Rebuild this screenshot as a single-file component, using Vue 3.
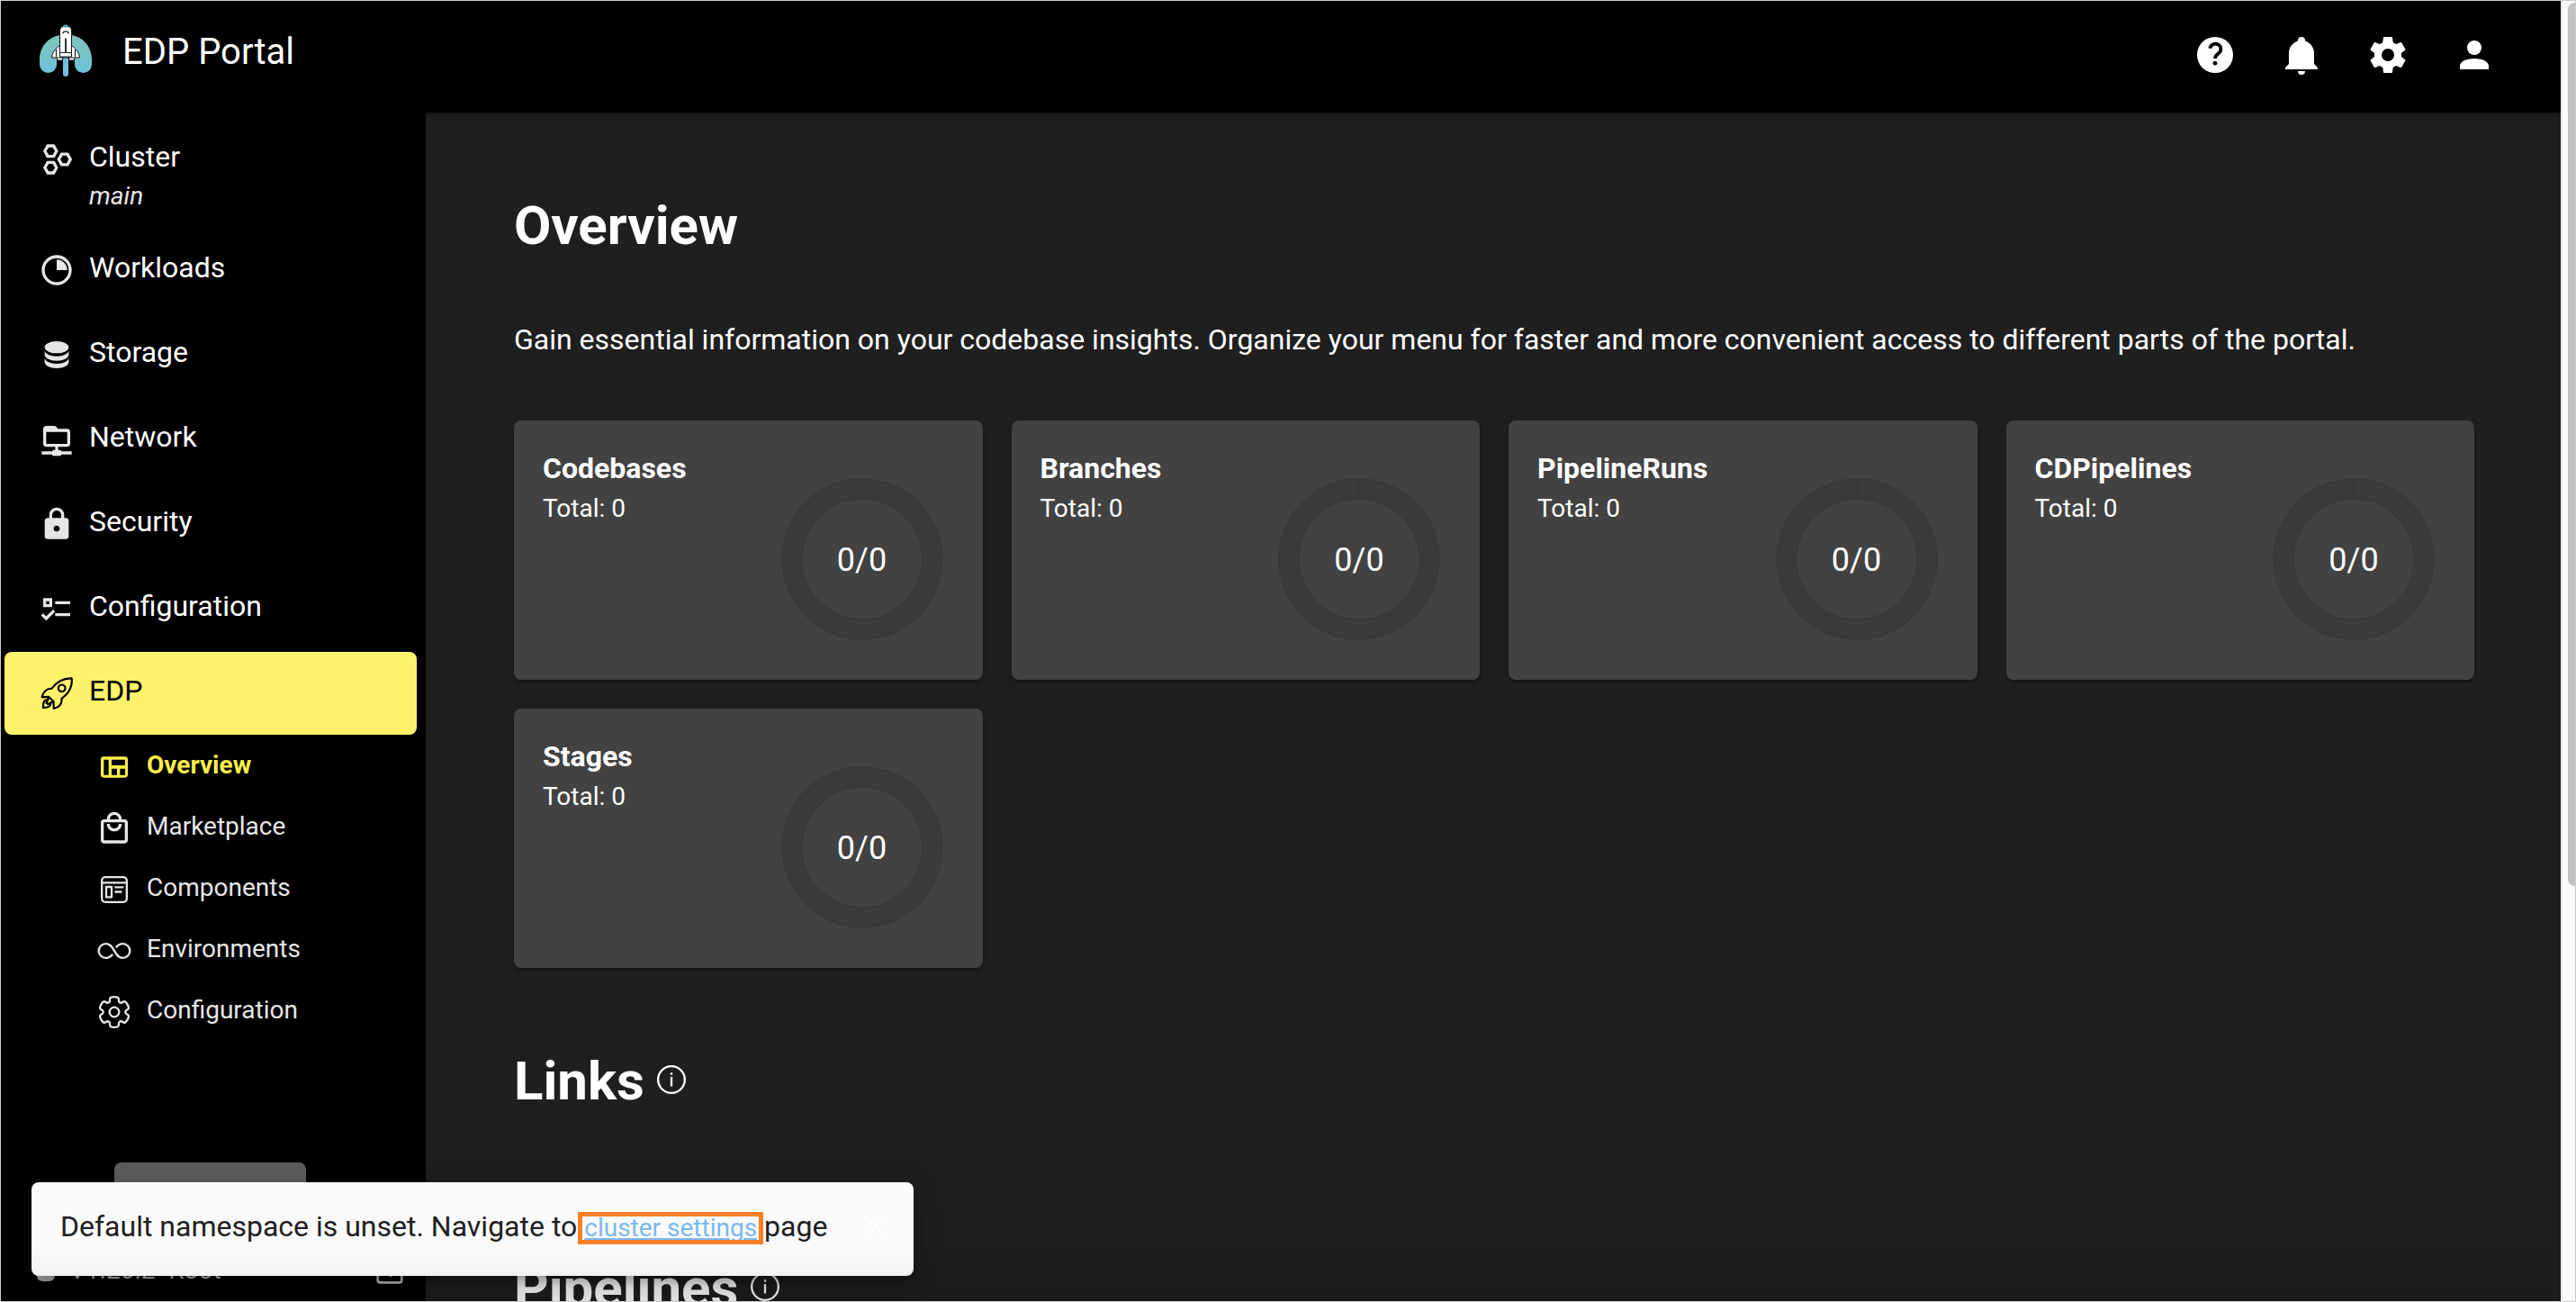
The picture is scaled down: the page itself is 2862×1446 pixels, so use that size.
<script setup>
const cards = ['Codebases', 'Branches', 'PipelineRuns', 'CDPipelines', 'Stages'].map((title) => ({
  title,
  total: 0,
  ok: 0,
}))

const headerActions = [
  { name: 'Notifications', path: 'M21,19V20H3V19L5,17V11C5,7.9 7.03,5.17 10,4.29C10,4.19 10,4.1 10,4A2,2 0 0,1 12,2A2,2 0 0,1 14,4C14,4.1 14,4.19 14,4.29C16.97,5.17 19,7.9 19,11V17L21,19M14,21A2,2 0 0,1 12,23A2,2 0 0,1 10,21' },
  { name: 'Settings', path: 'M12,15.5A3.5,3.5 0 0,1 8.5,12A3.5,3.5 0 0,1 12,8.5A3.5,3.5 0 0,1 15.5,12A3.5,3.5 0 0,1 12,15.5M19.43,12.97C19.47,12.65 19.5,12.33 19.5,12C19.5,11.67 19.47,11.34 19.43,11L21.54,9.37C21.73,9.22 21.78,8.95 21.66,8.73L19.66,5.27C19.54,5.05 19.27,4.96 19.05,5.05L16.56,6.05C16.04,5.66 15.5,5.32 14.87,5.07L14.5,2.42C14.46,2.18 14.25,2 14,2H10C9.75,2 9.54,2.18 9.5,2.42L9.13,5.07C8.5,5.32 7.96,5.66 7.44,6.05L4.95,5.05C4.73,4.96 4.46,5.05 4.34,5.27L2.34,8.73C2.21,8.95 2.27,9.22 2.46,9.37L4.57,11C4.53,11.34 4.5,11.67 4.5,12C4.5,12.33 4.53,12.65 4.57,12.97L2.46,14.63C2.27,14.78 2.21,15.05 2.34,15.27L4.34,18.73C4.46,18.95 4.73,19.03 4.95,18.95L7.44,17.94C7.96,18.34 8.5,18.68 9.13,18.93L9.5,21.58C9.54,21.82 9.75,22 10,22H14C14.25,22 14.46,21.82 14.5,21.58L14.87,18.93C15.5,18.67 16.04,18.34 16.56,17.94L19.05,18.95C19.27,19.03 19.54,18.95 19.66,18.73L21.66,15.27C21.78,15.05 21.73,14.78 21.54,14.63L19.43,12.97Z' },
  { name: 'Account', path: 'M12,4A4,4 0 0,1 16,8A4,4 0 0,1 12,12A4,4 0 0,1 8,8A4,4 0 0,1 12,4M12,14C16.42,14 20,15.79 20,18V20H4V18C4,15.79 7.58,14 12,14Z' },
]

const navItems = [
  { label: 'Cluster', note: 'main', path: 'M10.25 2L10.69 2.26L13 6.5L10.69 10.74L10.25 11H5.75L5.31 10.74L3 6.5L5.31 2.26L5.75 2ZM6.7 4L5.2 6.5L6.7 9H9.3L10.8 6.5L9.3 4ZM10.25 13L10.69 13.26L13 17.5L10.69 21.74L10.25 22H5.75L5.31 21.74L3 17.5L5.31 13.26L5.75 13ZM6.7 15L5.2 17.5L6.7 20H9.3L10.8 17.5L9.3 15ZM19.5 7.5L19.94 7.76L22.25 12L19.94 16.24L19.5 16.5H15L14.56 16.24L12.25 12L14.56 7.76L15 7.5ZM16 9.5L14.5 12L16 14.5H18.5L20 12L18.5 9.5Z' },
  { label: 'Workloads', path: 'M12 2a10 10 0 1 0 0 20a10 10 0 1 0 0-20M12 4a8 8 0 1 1 0 16a8 8 0 1 1 0-16M12 5V12H19A7 7 0 0 0 12 5Z' },
  { label: 'Storage', path: 'M12,3C7.58,3 4,4.79 4,7C4,9.21 7.58,11 12,11C16.42,11 20,9.21 20,7C20,4.79 16.42,3 12,3M4,9V12C4,14.21 7.58,16 12,16C16.42,16 20,14.21 20,12V9C20,11.21 16.42,13 12,13C7.58,13 4,11.21 4,9M4,14V17C4,19.21 7.58,21 12,21C16.42,21 20,19.21 20,17V14C20,16.21 16.42,18 12,18C7.58,18 4,16.21 4,14Z' },
  { label: 'Network', path: 'M15 20C15 19.45 14.55 19 14 19H13V17H19C20.11 17 21 16.11 21 15V7C21 5.9 20.11 5 19 5H13L11 3H5C3.9 3 3 3.9 3 5V15C3 16.11 3.9 17 5 17H11V19H10C9.45 19 9 19.45 9 20H2V22H9C9 22.55 9.45 23 10 23H14C14.55 23 15 22.55 15 22H22V20H15M5 15V7H19V15H5Z' },
  { label: 'Security', path: 'M12,17A2,2 0 0,0 14,15C14,13.89 13.1,13 12,13A2,2 0 0,0 10,15A2,2 0 0,0 12,17M18,8A2,2 0 0,1 20,10V20A2,2 0 0,1 18,22H6A2,2 0 0,1 4,20V10C4,8.89 4.9,8 6,8H7V6A5,5 0 0,1 12,1A5,5 0 0,1 17,6V8H18M12,3A3,3 0 0,0 9,6V8H15V6A3,3 0 0,0 12,3Z' },
  { label: 'Configuration', path: 'M3,5H9V11H3V5M5,7V9H7V7H5M11,7H21V9H11V7M11,15H21V17H11V15M5,20L1.5,16.5L2.91,15.09L5,17.17L9.59,12.59L11,14L5,20Z' },
]

// Closed outline with six rounded teeth, smoothed through segment midpoints
function gearOutline() {
  const pts = []
  for (let i = 0; i < 6; i++) {
    for (const [offset, r] of [[-22, 7.4], [-17, 10.6], [17, 10.6], [22, 7.4]]) {
      const a = ((i * 60 - 90 + offset) * Math.PI) / 180
      pts.push([12 + r * Math.cos(a), 12 + r * Math.sin(a)])
    }
  }
  const mid = (a, b) => `${((a[0] + b[0]) / 2).toFixed(2)} ${((a[1] + b[1]) / 2).toFixed(2)}`
  let d = `M${mid(pts[pts.length - 1], pts[0])}`
  pts.forEach((p, i) => {
    d += `Q${p[0].toFixed(2)} ${p[1].toFixed(2)} ${mid(p, pts[(i + 1) % pts.length])}`
  })
  return d + 'Z'
}

const subItems = [
  { label: 'Overview', active: true, path: 'M5 5H19A2 2 0 0 1 21 7V17A2 2 0 0 1 19 19H5A2 2 0 0 1 3 17V7A2 2 0 0 1 5 5ZM5 7V17.3H8.2V7ZM10.2 7V10.8H19.2V7ZM10.2 13V17.3H13.8V13ZM15.8 13V17.3H19.2V13Z' },
  { label: 'Marketplace', path: 'M19 6H17C17 3.2 14.8 1 12 1S7 3.2 7 6H5C3.9 6 3 6.9 3 8V20C3 21.1 3.9 22 5 22H19C20.1 22 21 21.1 21 20V8C21 6.9 20.1 6 19 6M12 3C13.7 3 15 4.3 15 6H9C9 4.3 10.3 3 12 3M19 20H5V8H19V20M12 12C10.3 12 9 10.7 9 9H7C7 11.8 9.2 14 12 14S17 11.8 17 9H15C15 10.7 13.7 12 12 12Z' },
  { label: 'Components', line: 'M6 3.7H18A2.3 2.3 0 0 1 20.3 6V18A2.3 2.3 0 0 1 18 20.3H6A2.3 2.3 0 0 1 3.7 18V6A2.3 2.3 0 0 1 6 3.7ZM3.7 7.4H20.3M6.6 10.2H10.2V17H6.6ZM12.2 10.4H18.2M12.2 13.5H17' },
  { label: 'Environments', line: 'M10.9 14.2C9.8 15.6 8.4 16.7 6.3 16.7A4.7 4.7 0 0 1 6.3 7.3C9.5 7.3 10.6 9.8 12 12S14.5 16.7 17.7 16.7A4.7 4.7 0 0 0 17.7 7.3C15.6 7.3 14.2 8.4 13.1 9.8' },
  { label: 'Configuration', line: gearOutline() + 'M12 8.8a3.2 3.2 0 1 0 0 6.4a3.2 3.2 0 1 0 0-6.4Z' },
]
</script>

<template>
  <div class="window">
    <div class="app">
      <header class="header">
        <div class="brand">
          <svg class="logo" viewBox="0 0 58 58" aria-hidden="true">
            <defs>
              <linearGradient id="arch" x1="0" y1="0" x2="0" y2="1">
                <stop offset="0" stop-color="#7fc5b8" />
                <stop offset="1" stop-color="#6fc1dc" />
              </linearGradient>
            </defs>
            <path fill="url(#arch)" d="M24 12h10C48 13 58 25 58 39v5.500a9.500 9.500 0 0 1-19 0V37C39 31 36 27 31 25H27C22 27 19 31 19 37v7.500a9.500 9.500 0 0 1-19 0V39C0 25 10 13 24 12z" />
            <rect x="26" y="36" width="6" height="22" rx="3" fill="#6fc1dc" />
            <g fill="#fff" stroke="#111" stroke-width="1">
              <path d="M18.500 35h7v5h-6zM32.500 35h7l-1 5h-6z" />
              <path d="M22.500 23.500C18 27 14 31 13.500 37H44.500C44 31 40 27 35.500 23.500z" />
              <path d="M22.500 36V8C22.500 4.500 24 2.500 26 2.500h6c2 0 3.500 2 3.500 5.500V36z" />
            </g>
            <path d="M25.500 3.500C26 1 27.500.3 29 .3S32 1 32.500 3.500z" fill="#45a9bf" />
            <path d="M25.700 10.500C26 7 32 7 32.300 10.500M22.500 31.500h13M18.500 28v8M39.500 28v8" fill="none" stroke="#222" stroke-width="1.200" />
            <path d="M29 15.500V31" stroke="#333" stroke-width="2" />
          </svg>
          <span class="brand-name">EDP Portal</span>
        </div>
        <div class="actions">
          <button type="button" class="icon-button" aria-label="Help">
            <svg viewBox="0 0 24 24">
              <circle cx="12" cy="12" r="10" fill="currentColor" />
              <path d="M9.200 8.400a3 2.900 0 1 1 4.700 2.700C12.700 12 12 12.600 12 14" fill="none" stroke="#000" stroke-width="1.900" />
              <circle cx="12" cy="16.600" r="1.200" fill="#000" />
            </svg>
          </button>
          <button v-for="a in headerActions" :key="a.name" type="button" class="icon-button" :aria-label="a.name">
            <svg viewBox="0 0 24 24"><path :d="a.path" fill="currentColor" /></svg>
          </button>
        </div>
      </header>

      <div class="body">
        <aside class="sidebar">
          <nav class="nav">
            <a v-for="item in navItems" :key="item.label" href="#" class="nav-item" :class="{ 'has-note': item.note }">
              <svg class="icon" viewBox="0 0 24 24"><path :d="item.path" fill="currentColor" fill-rule="evenodd" /></svg>
              <span class="nav-label">
                {{ item.label }}
                <em v-if="item.note" class="nav-note">{{ item.note }}</em>
              </span>
            </a>
            <a href="#" class="nav-item selected">
              <svg class="icon" viewBox="0 0 24 24" fill="none" stroke="currentColor" stroke-width="1.300" stroke-linejoin="round" stroke-linecap="round">
                <path d="M22 2C16.500 1.700 11.500 4.600 8.800 8.800C5.600 8.700 3 10.800 2.200 14.600L6.600 14.300L9.900 17.400L10 22.100C13.800 21.300 15.600 18.800 15.300 15.500C19.500 12.400 22.600 7.500 22 2Z" />
                <circle cx="15.400" cy="8.600" r="2.300" />
                <path d="M5 16.300C3.100 17 2.800 19 3 21.500C5.400 21.700 7.400 21.100 8 19.200M6.600 15L5.100 18.600M9.600 17.600L6 19.200" />
              </svg>
              <span class="nav-label">EDP</span>
            </a>
            <div class="subnav">
              <a v-for="s in subItems" :key="s.label" href="#" class="sub-item" :class="{ active: s.active }">
                <svg class="icon" viewBox="0 0 24 24">
                  <path v-if="s.path" :d="s.path" fill="currentColor" fill-rule="evenodd" />
                  <path v-else :d="s.line" fill="none" stroke="currentColor" stroke-width="1.400" stroke-linejoin="round" />
                </svg>
                <span class="sub-label">{{ s.label }}</span>
              </a>
            </div>
          </nav>
          <div class="sidebar-foot">
            <button type="button" class="add-button" aria-label="Add"></button>
            <div class="version">
              <svg class="version-icon" viewBox="0 0 20 24"><path d="M5 0h10l5 8v9q0 7-7 7H7q-7 0-7-7V8z" fill="currentColor" /></svg>
              <span>V1.20.2 -Root</span>
              <svg class="collapse" viewBox="0 0 24 24" fill="none" stroke="currentColor" stroke-width="2">
                <rect x="2" y="2" width="20" height="20" rx="2" /><path d="M7 12h9M12 7l5 5-5 5" />
              </svg>
            </div>
          </div>
        </aside>

        <main class="main">
          <h1 class="title">Overview</h1>
          <p class="intro">Gain essential information on your codebase insights. Organize your menu for faster and more convenient access to different parts of the portal.</p>
          <section class="cards">
            <article v-for="c in cards" :key="c.title" class="card">
              <div>
                <h3 class="card-title">{{ c.title }}</h3>
                <p class="card-total">Total: {{ c.total }}</p>
              </div>
              <div class="ring">
                <svg class="ring-shape" viewBox="0 0 180 180" fill="none" aria-hidden="true">
                  <circle cx="90" cy="90" r="78" stroke="#3b3b3b" stroke-width="23" />
                  <path d="M90 1V23" stroke="#363636" stroke-width="1" />
                  <circle cx="90" cy="90" r="89" stroke="#383838" stroke-width="1" />
                  <circle cx="90" cy="90" r="67" stroke="#383838" stroke-width="1" />
                </svg>
                <span class="ring-value">{{ c.ok }}/{{ c.total }}</span>
              </div>
            </article>
          </section>
          <h2 v-for="h in ['Links', 'Pipelines']" :key="h" class="title section-title">
            {{ h }}
            <svg class="icon info" viewBox="0 0 24 24" fill="none" stroke="currentColor">
              <circle cx="12" cy="12" r="8.900" stroke-width="1.400" />
              <path d="M12 10.200V16.500M12 7.400V8.900" stroke-width="1.400" />
            </svg>
          </h2>
        </main>
      </div>

      <div class="fade"></div>
      <div class="toast" role="status">
        <p class="toast-text">Default namespace is unset. Navigate to <a href="#" class="toast-link">cluster settings</a> page</p>
        <button type="button" class="toast-close" aria-label="Close">
          <svg viewBox="0 0 28 28"><path d="M1 1L27 27M27 1L1 27" stroke="#fff" stroke-width="2" /></svg>
        </button>
      </div>
    </div>
    <div class="scrollbar"><div class="thumb"></div></div>
  </div>
</template>

<style>
body {
  margin: 0;
  background: #000;
}
</style>

<style scoped>
* {
  box-sizing: border-box;
}
.window {
  display: flex;
  height: 100vh;
  border: 1px solid #cccccc;
  overflow: hidden;
  font-family: Roboto, "Open Sans", sans-serif;
  font-size: 32px;
  color: #fff;
}
.app {
  position: relative;
  flex: 1;
  min-width: 0;
  display: flex;
  flex-direction: column;
  background: #1f1f1f;
  overflow: hidden;
}
a {
  color: inherit;
  text-decoration: none;
}
h1, h2, h3, p {
  margin: 0;
}
button {
  padding: 0;
  border: 0;
  background: none;
  color: inherit;
  font: inherit;
}
svg {
  display: block;
}

.header {
  position: relative;
  z-index: 1;
  display: flex;
  align-items: center;
  justify-content: space-between;
  flex: none;
  padding: 12px 48px 16px 43px;
  background: #000;
  box-shadow: 0 1px 6px rgba(0, 0, 0, 0.6);
}
.brand {
  display: flex;
  align-items: center;
  gap: 34px;
  padding-bottom: 10px;
}
.logo {
  width: 58px;
  height: 58px;
}
.brand-name {
  padding-top: 4px;
  font-size: 40px;
  line-height: 48px;
}
.actions {
  display: flex;
}
.icon-button {
  padding: 24px;
}
.icon-button svg {
  width: 48px;
  height: 48px;
}

.body {
  display: flex;
  flex: 1;
  min-height: 0;
}
.sidebar {
  position: relative;
  z-index: 2;
  display: flex;
  flex-direction: column;
  justify-content: space-between;
  flex: none;
  width: 472px;
  background: #000;
}
.nav {
  display: flex;
  flex-direction: column;
  gap: 2px;
  padding: 6px 10px 0 4px;
}
.nav-item {
  display: flex;
  align-items: flex-start;
  gap: 16px;
  padding: 21px 38px 26px;
  border-radius: 8px;
}
.nav-item.has-note {
  padding-bottom: 12px;
}
.icon {
  flex: none;
  width: 40px;
  height: 40px;
  color: #e6e6e6;
}
.nav-item .icon {
  margin-top: 5px;
}
.nav-label {
  display: flex;
  flex-direction: column;
  line-height: 44px;
}
.nav-note {
  font-size: 28px;
  color: #e6e6e6;
}
.selected {
  background: #fdf26b;
  color: #000;
}
.selected .icon {
  color: #000;
}
.sub-item {
  display: flex;
  align-items: center;
  gap: 16px;
  height: 68px;
  padding-left: 102px;
  font-size: 28px;
  color: #e6e6e6;
}
.sub-label {
  padding-bottom: 6px;
}
.sub-item.active,
.sub-item.active .icon {
  color: #ffee4a;
  font-weight: 700;
}
.sidebar-foot {
  display: flex;
  flex-direction: column;
  gap: 30px;
  padding: 0 24px 18px 40px;
}
.add-button {
  align-self: flex-start;
  width: 213px;
  height: 74px;
  margin-left: 86px;
  border-radius: 8px;
  background: #5e5d5b;
}
.version {
  display: flex;
  align-items: center;
  gap: 16px;
  font-size: 28px;
  line-height: 32px;
  color: #b3b3b3;
}
.version-icon {
  width: 20px;
  height: 24px;
}
.collapse {
  width: 32px;
  height: 32px;
  margin-left: auto;
}

.main {
  flex: 1;
  min-width: 0;
  padding: 90px 96px 0 98px;
}
.title {
  font-size: 60px;
  line-height: 72px;
  font-weight: 700;
}
.intro {
  margin: 65px 0;
  line-height: 50px;
}
.cards {
  display: grid;
  grid-template-columns: repeat(4, 1fr);
  gap: 32px;
}
.card {
  display: flex;
  justify-content: space-between;
  padding: 32px 44px 44px 32px;
  border-radius: 8px;
  background: #424242;
  box-shadow: 0 2px 4px rgba(0, 0, 0, 0.4);
}
.card-title {
  font-size: 32px;
  line-height: 42px;
  font-weight: 700;
}
.card-total {
  margin-top: 4px;
  font-size: 28px;
  line-height: 40px;
}
.ring {
  display: grid;
  place-items: center;
  width: 180px;
  height: 180px;
  margin-top: 32px;
}
.ring-shape,
.ring-value {
  grid-area: 1 / 1;
}
.ring-value {
  padding-top: 2px;
  font-size: 36px;
}
.section-title {
  display: flex;
  align-items: center;
  gap: 10px;
  margin-top: 90px;
}
.section-title + .section-title {
  margin-top: 158px;
}
.info {
  margin-bottom: 4px;
  color: #fff;
}

.fade {
  position: absolute;
  left: 472px;
  right: 0;
  bottom: 0;
  height: 72px;
  background: linear-gradient(rgba(0, 0, 0, 0), rgba(0, 0, 0, 0.12));
  pointer-events: none;
}
.toast {
  position: absolute;
  z-index: 3;
  left: 34px;
  bottom: 28px;
  display: flex;
  align-items: center;
  gap: 40px;
  padding: 25px 28px 31px 32px;
  border-radius: 8px;
  background: linear-gradient(#fafafa 70%, #f2f2f2);
  color: #202020;
  box-shadow: 0 6px 10px rgba(0, 0, 0, 0.2), 0 10px 20px rgba(0, 0, 0, 0.14), 0 2px 36px rgba(0, 0, 0, 0.12);
}
.toast-text {
  line-height: 48px;
  white-space: nowrap;
}
.toast-link {
  display: inline-block;
  font-size: 28px;
  line-height: 22px;
  color: #7ab8f0;
  text-decoration: underline;
  text-decoration-thickness: 2px;
  text-underline-offset: 2px;
  outline: 5px solid #ff7f27;
  outline-offset: 2px;
}
.toast-close {
  width: 28px;
  height: 28px;
}

.scrollbar {
  display: flex;
  justify-content: flex-end;
  align-items: flex-start;
  flex: none;
  width: 16px;
  padding-top: 2px;
  border-left: 2px solid #e8e8e8;
  background: #fafafa;
}
.thumb {
  width: 8px;
  height: 68%;
  border-radius: 8px 0 0 8px;
  background: #c1c1c1;
}
</style>
